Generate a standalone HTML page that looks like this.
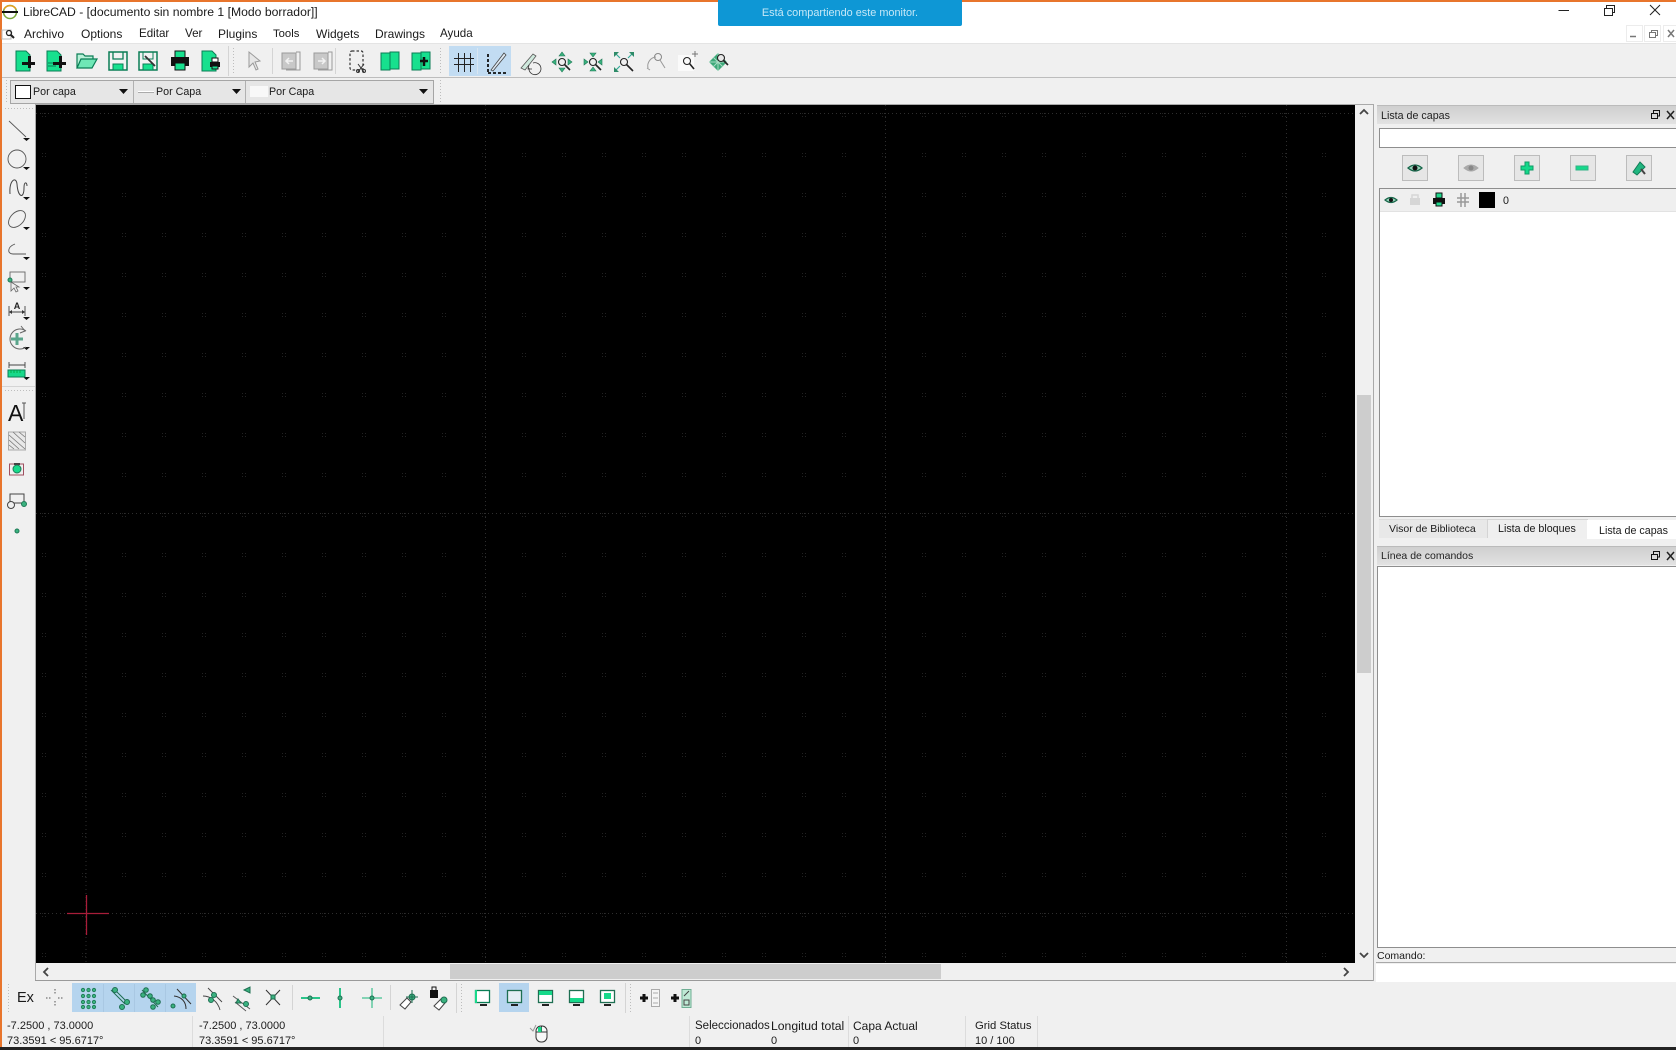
<!DOCTYPE html>
<html lang="es"><head><meta charset="utf-8"><title>LibreCAD</title>
<style>
html,body{margin:0;padding:0;width:1676px;height:1050px;overflow:hidden;background:#f0f0f0}
body{position:relative;font-family:"Liberation Sans",sans-serif;font-size:12px;color:#1a1a1a}
.a{position:absolute}
.t{position:absolute;white-space:nowrap;line-height:14px}
.s{font-size:11px}
.p{font-size:10.700px}
.ttl{background:linear-gradient(#cfcfcf,#e2e2e2);border-top:1px solid #bbb}
svg{position:absolute;left:0;top:0}
</style></head><body>
<!-- chrome -->
<div class="a" style="left:0;top:2px;width:1676px;height:42px;background:#fff"></div>
<div class="a" style="left:0;top:43px;width:1676px;height:1px;background:#e4e4e4"></div>
<div class="a" style="left:0;top:77px;width:1676px;height:1px;background:#bdbdbd"></div>
<div class="a" style="left:36px;top:105px;width:1319px;height:858px;background:#000"></div>
<div class="a" style="left:36px;top:104px;width:1338px;height:1px;background:#a9a9a9"></div>
<div class="a" style="left:35px;top:104px;width:1px;height:876px;background:#a9a9a9"></div>
<div class="a" style="left:35px;top:980px;width:1339px;height:1px;background:#9a9a9a"></div>
<div class="a" style="left:1373px;top:104px;width:1px;height:877px;background:#a9a9a9"></div>
<!-- scrollbars -->
<div class="a" style="left:1357px;top:395px;width:14px;height:278px;background:#cdcdcd"></div>
<div class="a" style="left:450px;top:964px;width:491px;height:15px;background:#cdcdcd"></div>
<!-- combos -->
<div class="a" style="left:10px;top:80px;width:422px;height:22px;border:1px solid #a5a5a5;background:#e6e6e6"></div>
<div class="a" style="left:133px;top:81px;width:1px;height:22px;background:#b0b0b0"></div>
<div class="a" style="left:245px;top:81px;width:1px;height:22px;background:#b0b0b0"></div>
<div class="a" style="left:15px;top:85px;width:14px;height:12px;border:1px solid #111;background:#fff"></div>
<div class="a" style="left:138px;top:91px;width:16px;height:1px;background:#fff;border-bottom:1px solid #aaa"></div>
<div class="a" style="left:250px;top:86px;width:18px;height:11px;background:#f8f8f8"></div>
<div class="t p" style="left:33px;top:85px">Por capa</div>
<div class="t p" style="left:156px;top:85px">Por Capa</div>
<div class="t p" style="left:269px;top:85px">Por Capa</div>
<!-- title -->
<div class="t" style="left:23px;top:5px;font-size:12.200px">LibreCAD - [documento sin nombre 1 [Modo borrador]]</div>
<div class="a" style="left:718px;top:0;width:244px;height:26px;background:#0e97d5;border-radius:0 0 2px 2px"></div>
<div class="t" style="left:718px;top:6px;width:244px;text-align:center;color:#c6e8f7;font-size:10.900px">Está compartiendo este monitor.</div>
<!-- menu -->
<div class="t" style="left:24px;top:27px">Archivo</div>
<div class="t" style="left:81px;top:27px">Options</div>
<div class="t" style="left:139px;top:27px;font-size:11.600px">Editar</div>
<div class="t" style="left:185px;top:27px;font-size:11.600px">Ver</div>
<div class="t" style="left:218px;top:27px">Plugins</div>
<div class="t" style="left:273px;top:27px;font-size:11.300px">Tools</div>
<div class="t" style="left:316px;top:27px">Widgets</div>
<div class="t" style="left:375px;top:27px">Drawings</div>
<div class="t" style="left:440px;top:27px;font-size:11.600px">Ayuda</div>
<!-- active highlights -->
<div class="a" style="left:449px;top:46px;width:62px;height:30px;background:#c2dcf2"></div>
<div class="a" style="left:72px;top:983px;width:124px;height:29px;background:#b5d4ee"></div>
<div class="a" style="left:499px;top:983px;width:30px;height:29px;background:#b5d4ee"></div>
<!-- right dock -->
<div class="a ttl" style="left:1377px;top:105px;width:299px;height:18px"></div>
<div class="t p" style="left:1381px;top:109px;color:#222">Lista de capas</div>
<div class="a" style="left:1379px;top:128px;width:297px;height:18px;background:#fff;border:1px solid #8e8e8e;border-right:0"></div>
<div class="a" style="left:1379px;top:188px;width:297px;height:327px;background:#fff;border:1px solid #8e8e8e;border-right:0"></div>
<div class="a" style="left:1380px;top:189px;width:296px;height:22px;background:#efefef;border-bottom:1px solid #e2e2e2"></div>
<div class="a" style="left:1479px;top:192px;width:16px;height:16px;background:#000"></div>
<div class="t p" style="left:1503px;top:194px">0</div>
<div class="a" style="left:1402px;top:155px;width:24px;height:24px;background:#e6e6e6;border:1px solid #bcbcbc"></div>
<div class="a" style="left:1458px;top:155px;width:24px;height:24px;background:#e6e6e6;border:1px solid #bcbcbc"></div>
<div class="a" style="left:1514px;top:155px;width:24px;height:24px;background:#e6e6e6;border:1px solid #bcbcbc"></div>
<div class="a" style="left:1570px;top:155px;width:24px;height:24px;background:#e6e6e6;border:1px solid #bcbcbc"></div>
<div class="a" style="left:1626px;top:155px;width:24px;height:24px;background:#e6e6e6;border:1px solid #bcbcbc"></div>
<!-- tabs -->
<div class="a" style="left:1379px;top:519px;width:108px;height:18px;background:#e8e8e8;border-top:1px solid #ddd"></div>
<div class="a" style="left:1487px;top:519px;width:99px;height:18px;background:#efefef;border:1px solid #d4d4d4;border-bottom:0"></div>
<div class="a" style="left:1587px;top:520px;width:89px;height:19px;background:#fff"></div>
<div class="t" style="left:1389px;top:522px;font-size:10.500px">Visor de Biblioteca</div>
<div class="t" style="left:1498px;top:522px;font-size:10.700px">Lista de bloques</div>
<div class="t" style="left:1599px;top:524px;font-size:10.700px">Lista de capas</div>
<!-- command -->
<div class="a ttl" style="left:1377px;top:546px;width:299px;height:18px"></div>
<div class="t" style="left:1381px;top:549px;color:#222;font-size:10.500px">Línea de comandos</div>
<div class="a" style="left:1377px;top:566px;width:299px;height:382px;background:#fff;border:1px solid #8e8e8e;border-right:0;box-sizing:border-box"></div>
<div class="t" style="left:1377px;top:949px;font-size:10.500px">Comando:</div>
<div class="a" style="left:1376px;top:962px;width:300px;height:1px;background:#a8a8a8"></div>
<div class="a" style="left:1376px;top:964px;width:300px;height:18px;background:#fff"></div>
<!-- status -->
<div class="t s" style="left:7px;top:1019px">-7.2500 , 73.0000</div>
<div class="t s" style="left:7px;top:1034px">73.3591 &lt; 95.6717°</div>
<div class="t s" style="left:199px;top:1019px">-7.2500 , 73.0000</div>
<div class="t s" style="left:199px;top:1034px">73.3591 &lt; 95.6717°</div>
<div class="t" style="left:695px;top:1019px;font-size:11.500px">Seleccionados</div><div class="t s" style="left:695px;top:1034px">0</div>
<div class="t" style="left:771px;top:1019px;font-size:12.200px">Longitud total</div><div class="t s" style="left:771px;top:1034px">0</div>
<div class="t" style="left:853px;top:1019px">Capa Actual</div><div class="t s" style="left:853px;top:1034px">0</div>
<div class="t" style="left:975px;top:1019px;font-size:11.300px">Grid Status</div><div class="t s" style="left:975px;top:1034px">10 / 100</div>
<div class="t" style="left:17px;top:990px;font-size:14.500px;line-height:16px">Ex</div>

<svg width="1676" height="1050" viewBox="0 0 1676 1050" fill="none">
<defs>
<pattern id="g" x="42" y="33" width="40" height="40" patternUnits="userSpaceOnUse">
<rect x="0" y="0" width="1" height="1" fill="#222"/><rect x="3" y="0" width="1" height="1" fill="#222"/><rect x="0" y="3" width="1" height="1" fill="#222"/><rect x="3" y="3" width="1" height="1" fill="#222"/>
</pattern>
<clipPath id="c"><rect x="36" y="105" width="1319" height="858"/></clipPath>
</defs>
<!-- grid -->
<g clip-path="url(#c)">
<rect x="36" y="105" width="1319" height="858" fill="url(#g)"/>
<g stroke="#2e2e2e" stroke-dasharray="1 3" stroke-width="1">
<path d="M86 105V963M485.500 105V963M885.500 105V963M1286.500 105V963M36 113.500H1355M36 513.500H1355M36 913.500H1355"/>
</g>
<path d="M86.500 895V935" stroke="#a81d3a" stroke-width="1.300"/>
<path d="M67 913.500H109" stroke="#a81d3a" stroke-width="1.300"/>
</g>
<!-- edges -->
<rect x="0" y="0" width="1676" height="2" fill="#e8752c"/>
<rect x="718" y="0" width="244" height="2" fill="#0e97d5"/>
<rect x="0" y="0" width="2" height="1047" fill="#e8752c"/>
<rect x="0" y="1047" width="1676" height="3" fill="#232323"/>
<!-- status separators -->
<path d="M192.500 1016V1047M383.500 1016V1047M689.500 1016V1047M848.500 1016V1047M965.500 1016V1047M1037.500 1016V1047" stroke="#dcdcdc"/>
<!-- app icon -->
<g transform="translate(10,12)"><circle r="6.500" stroke="#7aa83a" stroke-width="1.500"/><path d="M-6-3A7 7 0 0 1 6-3" stroke="#e2a020" stroke-width="1.500"/><path d="M-8 0H8" stroke="#111" stroke-width="2"/></g>
<!-- menu magnifier -->
<g transform="translate(10,34)"><rect x="-8" y="-4" width="9" height="9" stroke="#bbb"/><circle cx="-1" cy="-1" r="2.500" stroke="#222" stroke-width="1.300"/><path d="M1 1L4 4" stroke="#222" stroke-width="2"/></g>
<!-- window controls -->
<path d="M1558.500 10.500H1569" stroke="#222"/>
<g stroke="#222"><rect x="1604.500" y="8.500" width="8" height="7"/><path d="M1606.500 8.500V5.500H1614.500V12.500H1612.500"/></g>
<path d="M1650 5L1660 15M1660 5L1650 15" stroke="#222"/>
<g stroke="#ececec"><rect x="1626.500" y="25.500" width="16" height="16"/><rect x="1644.500" y="25.500" width="16" height="16"/><rect x="1663.500" y="25.500" width="13" height="16"/></g>
<path d="M1630 36.500H1636" stroke="#777" stroke-width="1.500"/>
<g stroke="#777"><rect x="1649.500" y="32.500" width="6" height="5"/><path d="M1651.500 32.500V30.500H1657.500V35.500H1655.500"/></g>
<path d="M1668 30L1674 37M1674 30L1668 37" stroke="#777" stroke-width="1.500"/>
<!-- toolbar handles/separators -->
<g stroke="#bdbdbd" stroke-dasharray="1 2">
<path d="M233.500 48V74M440.500 48V74M440.500 80V102M6.500 80V102M5 108.500H34M5 390.500H34M8.500 984V1012M461.500 984V1012M630.500 984V1012"/>
</g>
<path d="M272.500 48V74M335.500 48V74M228.500 46V76M292.500 985V1010M390.500 985V1010M456.500 983V1013M625.500 983V1013M2 386.500H35" stroke="#d4d4d4"/>
<path d="M477.500 48V74" stroke="#d9e6f1"/>
<path d="M103.500 984V1012M134.500 984V1012M165.500 984V1012" stroke="#a9c8e3"/>
<!-- top toolbar -->
<g transform="translate(25,61)"><path d="M-9-10H1L5-6V10H-9Z" fill="#17e08e" stroke="#0a7d55"/><path d="M3-3V3H-3V6H3V9H6V6H10V3H6V-3Z" fill="#111" transform="translate(0,-2)"/></g>
<g transform="translate(56,61)"><path d="M-9-10H1L5-6V10H-9Z" fill="#17e08e" stroke="#0a7d55"/><path d="M-8 2H0M-8 5H0" stroke="#0a7d55"/><path d="M3-3V3H-3V6H3V9H6V6H10V3H6V-3Z" fill="#111" transform="translate(0,-2)"/></g>
<g transform="translate(87,61)"><path d="M-10 7V-7H-4L-2-5H6V-2" fill="#b8f2d8" stroke="#0a7d55" stroke-width="1.200"/><path d="M-10 7L-6-2H10L5 7Z" fill="#6fe7b6" stroke="#0a7d55" stroke-width="1.200"/></g>
<g transform="translate(118,61)"><path d="M-9-9H9V9H-9Z" fill="#f2f2f2" stroke="#0a7d55" stroke-width="1.500"/><path d="M-5-9V-2H5V-9" stroke="#0a7d55" stroke-width="1.300"/><rect x="-5" y="3" width="10" height="6" fill="#17e08e" stroke="#0a7d55"/></g>
<g transform="translate(148,61)"><path d="M-9-9H9V9H-9Z" fill="#f2f2f2" stroke="#0a7d55" stroke-width="1.500"/><path d="M-5-9V-2H5V-9" stroke="#0a7d55"/><rect x="-5" y="3" width="10" height="6" fill="#17e08e" stroke="#0a7d55"/><path d="M-3-5L7 5" stroke="#333" stroke-width="1.800"/></g>
<g transform="translate(180,61)"><rect x="-5" y="-10" width="10" height="7" fill="#17e08e" stroke="#111"/><rect x="-9" y="-4" width="18" height="9" fill="#111"/><rect x="-5" y="2" width="10" height="7" fill="#17e08e" stroke="#111"/></g>
<g transform="translate(211,61)"><path d="M-9-10H1L5-6V10H-9Z" fill="#17e08e" stroke="#0a7d55"/><rect x="1" y="-3" width="6" height="4" fill="#fff" stroke="#111"/><rect x="-1" y="1" width="10" height="5" fill="#111"/><rect x="1" y="5" width="6" height="3" fill="#17e08e" stroke="#111"/></g>
<path d="M249 52L249 67L253 63L256 70L258 69L255 62L260 61Z" fill="#e6e6e6" stroke="#9a9a9a"/>
<g transform="translate(290,61)" fill="#c8c8c8" stroke="#9a9a9a"><path d="M-8-8H6V8H-8Z"/><path d="M6-9H10V9H-4" fill="none"/><path d="M3 0H-4M-1-3L-4 0L-1 3" stroke="#f2f2f2" stroke-width="1.500" fill="none"/></g>
<g transform="translate(322,61)" fill="#c8c8c8" stroke="#9a9a9a"><path d="M-8-8H6V8H-8Z"/><path d="M6-9H10V9H-4" fill="none"/><path d="M-4 0H3M0-3L3 0L0 3" stroke="#f2f2f2" stroke-width="1.500" fill="none"/></g>
<g transform="translate(357,61)"><rect x="-7" y="-10" width="13" height="19" rx="2" stroke="#333" stroke-dasharray="2.500 2" stroke-width="1.200"/><path d="M1 3L7 11M7 3L1 11" stroke="#333"/><circle cx="1" cy="10" r="1.500" stroke="#333"/><circle cx="7" cy="10" r="1.500" stroke="#333"/></g>
<g transform="translate(390,61)"><rect x="-9" y="-8" width="9" height="17" fill="#17e08e" stroke="#0a7d55"/><rect x="0" y="-9" width="9" height="17" fill="#17e08e" stroke="#0a7d55"/></g>
<g transform="translate(421,61)"><rect x="-9" y="-8" width="9" height="17" fill="#17e08e" stroke="#0a7d55"/><rect x="0" y="-9" width="9" height="17" fill="#17e08e" stroke="#0a7d55"/><path d="M-1 0H7M3-4V5" stroke="#111" stroke-width="2.500"/></g>
<g transform="translate(464,62)" stroke="#222"><path d="M-4.500-9V10M1.500-9V10M7.500-9V10M-9-3.500H11M-9 2.500H11" transform="translate(-1,0)"/></g>
<g transform="translate(496,62)" stroke="#111"><path d="M-8-8V11" stroke-width="1.800" stroke-dasharray="3 2"/><path d="M-8 11H11" stroke-width="1.800" stroke-dasharray="3 2"/><path d="M-5 8L8-9L10-7L-3 9Z" fill="#dfe9f2" stroke="#444" stroke-width=".8"/></g>
<g transform="translate(531,62)"><path d="M-10 6L2-8L5-6L-6 8Z" fill="#cfe9dd" stroke="#555" stroke-width=".8"/><path d="M-2 6A6 6 0 1 0 2 1" stroke="#333" stroke-width=".8"/><path d="M-2 3L-3 7L1 7" stroke="#333" stroke-width=".8"/></g>
<g transform="translate(562,62)"><circle cx="0" cy="0" r="3.500" stroke="#222" stroke-width="1.100"/><path d="M2.500 2.500L8 8" stroke="#222" stroke-width="1.600"/><path d="M0-10L-3-6H3ZM0 10L-3 6H3ZM-10 0L-6-3V3ZM10 0L6-3V3Z" fill="#3ab27f" stroke="#1e7a56" stroke-width=".6"/></g>
<g transform="translate(593,62)"><circle r="3.500" stroke="#222" stroke-width="1.100"/><path d="M2.500 2.500L8 8" stroke="#222" stroke-width="1.600"/><path d="M0-5L-3-9H3ZM0 5L-3 9H3ZM-5 0L-9-3V3ZM5 0L9-3V3Z" fill="#3ab27f" stroke="#1e7a56" stroke-width=".6"/></g>
<g transform="translate(624,62)"><circle r="3.500" stroke="#222" stroke-width="1.100"/><path d="M2.500 2.500L9 9" stroke="#222" stroke-width="1.600"/><path d="M-4-4L-9-9M4-4L9-9M-4 4L-9 9" stroke="#3a9" stroke-width="1.200"/><path d="M-10-10H-5L-10-5ZM10-10H5L10-5ZM-10 10H-5L-10 5Z" fill="#2e8b68"/></g>
<g transform="translate(656,62)"><circle cx="2" cy="-5" r="3.500" stroke="#888" stroke-width="1"/><path d="M4-2L9 6M-8 6A9 9 0 0 1 0-5M-9 6L-6 8" stroke="#999" stroke-width="1"/></g>
<g transform="translate(687,62)"><rect x="-9" y="-7" width="16" height="16" fill="#fafafa"/><circle cy="-1" r="3.500" stroke="#222" stroke-width="1.100"/><path d="M2.500 1.500L7 7" stroke="#222" stroke-width="1.600"/><path d="M5-8H11M8-11V-5" stroke="#777"/></g>
<g transform="translate(718,62)"><path d="M-9 0L0-9L9 0L0 9Z" fill="#3ea97a"/><path d="M-9 0H9M0-9V9M-5-5L5 5M-5 5L5-5" stroke="#a7dcc3"/><circle cx="3" cy="-4" r="3.500" fill="#e8e8e8" stroke="#222" stroke-width="1.100"/><path d="M5-2L10 3" stroke="#222" stroke-width="1.600"/></g>
<!-- combo arrows -->
<path d="M119 89H128L123.500 94ZM232 89H241L236.500 94ZM419 89H428L423.500 94Z" fill="#111"/>
<!-- left toolbar -->
<path d="M9 121L26 137" stroke="#555" stroke-width=".9"/>
<path d="M23 138H30L26.500 141ZM23 167H30L26.500 170ZM23 197H30L26.500 200ZM23 227H30L26.500 230ZM23 257H30L26.500 260ZM23 287H30L26.500 290ZM23 317H30L26.500 320ZM23 347H30L26.500 350ZM23 377H30L26.500 380Z" fill="#111"/>
<circle cx="17" cy="159" r="9" stroke="#555" stroke-width=".9"/>
<path d="M10 194C9 180 16 176 17 184C18 198 24 199 24 188C24 181 27 182 27 186" stroke="#444"/>
<ellipse cx="17" cy="219" rx="10" ry="6.500" stroke="#555" stroke-width=".9" transform="rotate(-45 17 219)"/>
<path d="M15 244C7 247 7 254 13 254H26" stroke="#555" stroke-width=".9"/>
<g><rect x="10" y="272" width="15" height="10" stroke="#666" stroke-width=".9"/><circle cx="10" cy="280" r="2" fill="#3ab27f" stroke="#1e7a56"/><path d="M11 282V291L14 288L16 292L18 291L16 287L19 287Z" fill="#eee" stroke="#666" stroke-width=".8"/></g>
<g><path d="M9 306V316M25 306V316M9 312H25" stroke="#444" stroke-width=".9"/><path d="M9 312L12 310V314ZM25 312L22 310V314Z" fill="#333"/><text x="17" y="309" font-family="Liberation Sans,sans-serif" font-size="9" font-weight="bold" fill="#222" text-anchor="middle">A</text></g>
<g><path d="M26 331A10 10 0 1 0 26 347" stroke="#666" stroke-width="1"/><path d="M17 333V345M11 339H23" stroke="#5aa58b" stroke-width="3"/><path d="M21 326L25 331L20 333" stroke="#666"/></g>
<g><path d="M9 362V368M25 362V368M9 365H25" stroke="#444" stroke-width=".9"/><rect x="8" y="370" width="17" height="7" fill="#17d98a" stroke="#0a7d55"/><path d="M11 370V373M14 370V373M17 370V373M20 370V373" stroke="#0a4"/></g>
<text x="8" y="421" font-family="Liberation Sans,sans-serif" font-size="23" fill="#111">A</text>
<path d="M24 403V419M22 403H26" stroke="#555"/>
<g><rect x="8.500" y="432" width="17" height="18" fill="#e8e8e8" stroke="#aaa"/><path d="M9 435L25 449M9 440L19 449M9 445L14 449M13 432L25 443M19 432L25 437" stroke="#777" stroke-width=".8"/></g>
<g><rect x="9.500" y="464" width="14" height="11" stroke="#a05060"/><circle cx="17" cy="469" r="4" fill="#17d98a" stroke="#1e7a56"/><path d="M14 463H20V465H14Z" fill="#444"/></g>
<g><rect x="10" y="494" width="14" height="9" stroke="#444"/><circle cx="11" cy="505" r="3.500" fill="#f0f0f0" stroke="#444"/><circle cx="24" cy="504" r="2.500" fill="#3ab27f" stroke="#1e7a56"/></g>
<circle cx="17" cy="531" r="2" fill="#3ab27f" stroke="#1e7a56"/>
<!-- scrollbar arrows -->
<g stroke="#444" stroke-width="1.800"><path d="M1360 114L1364 110L1368 114M1360 953L1364 957L1368 953M48 968L44 972L48 976M1344 968L1348 972L1344 976"/></g>
<!-- dock title icons -->
<g stroke="#111"><rect x="1651.500" y="113.500" width="6" height="5"/><path d="M1653.500 113.500V110.500H1659.500V116H1657.500"/><rect x="1651.500" y="554.500" width="6" height="5"/><path d="M1653.500 554.500V551.500H1659.500V557H1657.500"/></g>
<path d="M1667 111L1674 119M1674 111L1667 119M1667 552L1674 560M1674 552L1667 560" stroke="#222" stroke-width="1.500"/>
<!-- dock buttons -->
<g transform="translate(1415,168)"><path d="M-7 0Q0-6 7 0Q0 6-7 0Z" fill="#9ad3bb" stroke="#17664a" stroke-width="1.300"/><circle r="2.500" fill="#111"/></g>
<g transform="translate(1471,168)"><path d="M-7 0Q0-6 7 0Q0 6-7 0Z" fill="#aaa" stroke="#aaa"/><circle r="2.500" fill="#888"/></g>
<path d="M1525 162H1529V166H1533V170H1529V174H1525V170H1521V166H1525Z" fill="#14d98a" stroke="#0e9a66"/>
<rect x="1576" y="166" width="12" height="4" fill="#14d98a" stroke="#33b386"/>
<g transform="translate(1639,168)"><path d="M-6 4L1-6L6-1L-2 7Z" fill="#1fb67f" stroke="#127a56"/><path d="M2 1L6 6" stroke="#444" stroke-width="2"/></g>
<!-- row icons -->
<g transform="translate(1391,200)"><path d="M-6 0Q0-5 6 0Q0 5-6 0Z" fill="#9ad3bb" stroke="#17664a" stroke-width="1.200"/><circle r="2" fill="#111"/></g>
<g transform="translate(1415,200)"><rect x="-5" y="-2" width="10" height="7" fill="#d6d6d6"/><path d="M-3-2V-5H3V-2" stroke="#d6d6d6" stroke-width="1.500"/></g>
<g transform="translate(1439,200)"><rect x="-3" y="-7" width="6" height="5" fill="#1fd88c" stroke="#111"/><rect x="-6" y="-2" width="12" height="6" fill="#111"/><rect x="-3" y="2" width="6" height="4" fill="#1fd88c" stroke="#111"/></g>
<path d="M1461 193V207M1465 193V207M1457 198H1469M1457 202H1469" stroke="#999" stroke-width="1.500"/>
<!-- bottom toolbar -->
<path d="M55 989V994M55 1001V1006M46 998H51M58 998H64" stroke="#555" stroke-dasharray="1.500 1.500"/>
<g fill="#3ab27f" stroke="#1e7a56" stroke-width=".8"><circle cx="83" cy="990" r="1.700"/><circle cx="88.500" cy="990" r="1.700"/><circle cx="94" cy="990" r="1.700"/><circle cx="83" cy="996" r="1.700"/><circle cx="88.500" cy="996" r="1.700"/><circle cx="94" cy="996" r="1.700"/><circle cx="83" cy="1002" r="1.700"/><circle cx="88.500" cy="1002" r="1.700"/><circle cx="94" cy="1002" r="1.700"/><circle cx="83" cy="1007" r="1.700"/><circle cx="88.500" cy="1007" r="1.700"/><circle cx="94" cy="1007" r="1.700"/></g>
<g stroke="#1e6f52" stroke-width="1"><path d="M111 990L125 1004M113 988L129 1004"/><g fill="#3ab27f"><circle cx="115" cy="990" r="2.500"/><circle cx="127" cy="1002" r="2.500"/><circle cx="122" cy="1007" r="2.500"/></g></g>
<g stroke="#1e6f52" stroke-width="1"><path d="M142 990L158 1007"/><g fill="#3ab27f"><circle cx="146" cy="990" r="2.300"/><circle cx="143" cy="995" r="2.300"/><circle cx="150" cy="996" r="2.300"/><circle cx="153" cy="1000" r="2.300"/><circle cx="158" cy="1002" r="2.300"/><circle cx="153" cy="1007" r="2.300"/></g></g>
<g stroke="#333"><path d="M177 989L191 1004M174 996C182 997 186 1002 186 1009"/><circle cx="173" cy="1006" r="2" fill="#3ab27f" stroke="#1e6f52"/><circle cx="184" cy="996" r="2" fill="#3ab27f" stroke="#1e6f52"/></g>
<g stroke="#444"><path d="M208 988L222 1002M203 996C211 996 218 1002 220 1010" stroke-width=".9"/><circle cx="214" cy="995" r="2.500" fill="#3ab27f" stroke="#1e6f52"/><circle cx="211" cy="1000" r="2.500" fill="#3ab27f" stroke="#1e6f52"/></g>
<g stroke="#555"><path d="M233 996L250 1009M235 1002L246 1011" stroke-width=".9"/><path d="M244 990L250 987V993ZM238 999L236 1003L241 1003Z" fill="#3ab27f" stroke="#1e6f52"/><circle cx="246" cy="1004" r="2.500" fill="#3ab27f" stroke="#1e6f52"/></g>
<path d="M266 990L280 1005M280 990L266 1005" stroke="#333"/><rect x="271" y="995" width="4" height="4" fill="#3ab27f" stroke="#1e6f52"/>
<path d="M301 998H320" stroke="#2bc48a" stroke-width="2"/><circle cx="310" cy="998" r="2" fill="#3ab27f" stroke="#1e6f52"/>
<path d="M340 988V1008" stroke="#2bc48a" stroke-width="2"/><circle cx="340" cy="998" r="2" fill="#3ab27f" stroke="#1e6f52"/>
<path d="M372 988V1008M362 998H382" stroke="#5fc9a0" stroke-width="1.500"/><circle cx="372" cy="998" r="2" fill="#3ab27f" stroke="#1e6f52"/>
<g><path d="M400 1005L407 998L411 1002L405 1009Z" fill="#fff" stroke="#444"/><circle cx="412" cy="997" r="3" fill="#3ab27f" stroke="#1e6f52"/><path d="M412 990V1003M406 997H418" stroke="#1e6f52"/></g>
<g><rect x="430" y="990" width="8" height="8" fill="#111"/><path d="M432 990V987H436V990" stroke="#111"/><path d="M434 1006L441 999L445 1003L439 1010Z" fill="#fff" stroke="#444"/><circle cx="444" cy="1000" r="3" fill="#3ab27f" stroke="#1e6f52"/></g>
<!-- monitors -->
<g><rect x="475.500" y="990.500" width="14" height="12" fill="#fff" stroke="#0a7d55" stroke-width="1.300"/><rect x="475" y="990" width="2" height="13" fill="#17d98a"/><path d="M480 1005H487" stroke="#222" stroke-width="2"/></g>
<g><rect x="507.500" y="990.500" width="14" height="12" fill="#e5eef5" stroke="#1e6f52" stroke-width="1.300"/><path d="M511 1005H518" stroke="#222" stroke-width="2"/></g>
<g><rect x="538.500" y="990.500" width="14" height="12" fill="#fff" stroke="#1e6f52" stroke-width="1.300"/><rect x="539" y="991" width="13" height="4" fill="#17d98a"/><path d="M542 1005H549" stroke="#222" stroke-width="2"/></g>
<g><rect x="569.500" y="990.500" width="14" height="12" fill="#fff" stroke="#1e6f52" stroke-width="1.300"/><rect x="570" y="998" width="13" height="4" fill="#17d98a"/><path d="M573 1005H580" stroke="#222" stroke-width="2"/></g>
<g><rect x="600.500" y="990.500" width="14" height="12" fill="#fff" stroke="#1e6f52" stroke-width="1.300"/><rect x="604" y="993" width="7" height="6" fill="#17d98a"/><path d="M604 1005H611" stroke="#222" stroke-width="2"/></g>
<g><path d="M640 998H648M644 994V1002" stroke="#111" stroke-width="3"/><rect x="651.500" y="989.500" width="8" height="17" fill="#f5f5f5" stroke="#aaa"/><path d="M653 993H658M653 998H658M653 1003H658" stroke="#aaa"/></g>
<g><path d="M671 998H679M675 994V1002" stroke="#111" stroke-width="3"/><rect x="682" y="989.500" width="9" height="18" fill="#bfe9d5" stroke="#6fae94"/><path d="M684 996L689 991M684 1000H689V1005H684Z" stroke="#444"/></g>
<!-- mouse -->
<g><rect x="536" y="1026" width="11" height="16" rx="5" fill="#f8f8f8" stroke="#333"/><path d="M536 1032H547M541.500 1026V1032" stroke="#333"/><rect x="538" y="1027" width="3.500" height="5" fill="#17d98a"/><path d="M530 1028L533 1031L536 1025" stroke="#999"/></g>
</svg>
</body></html>
